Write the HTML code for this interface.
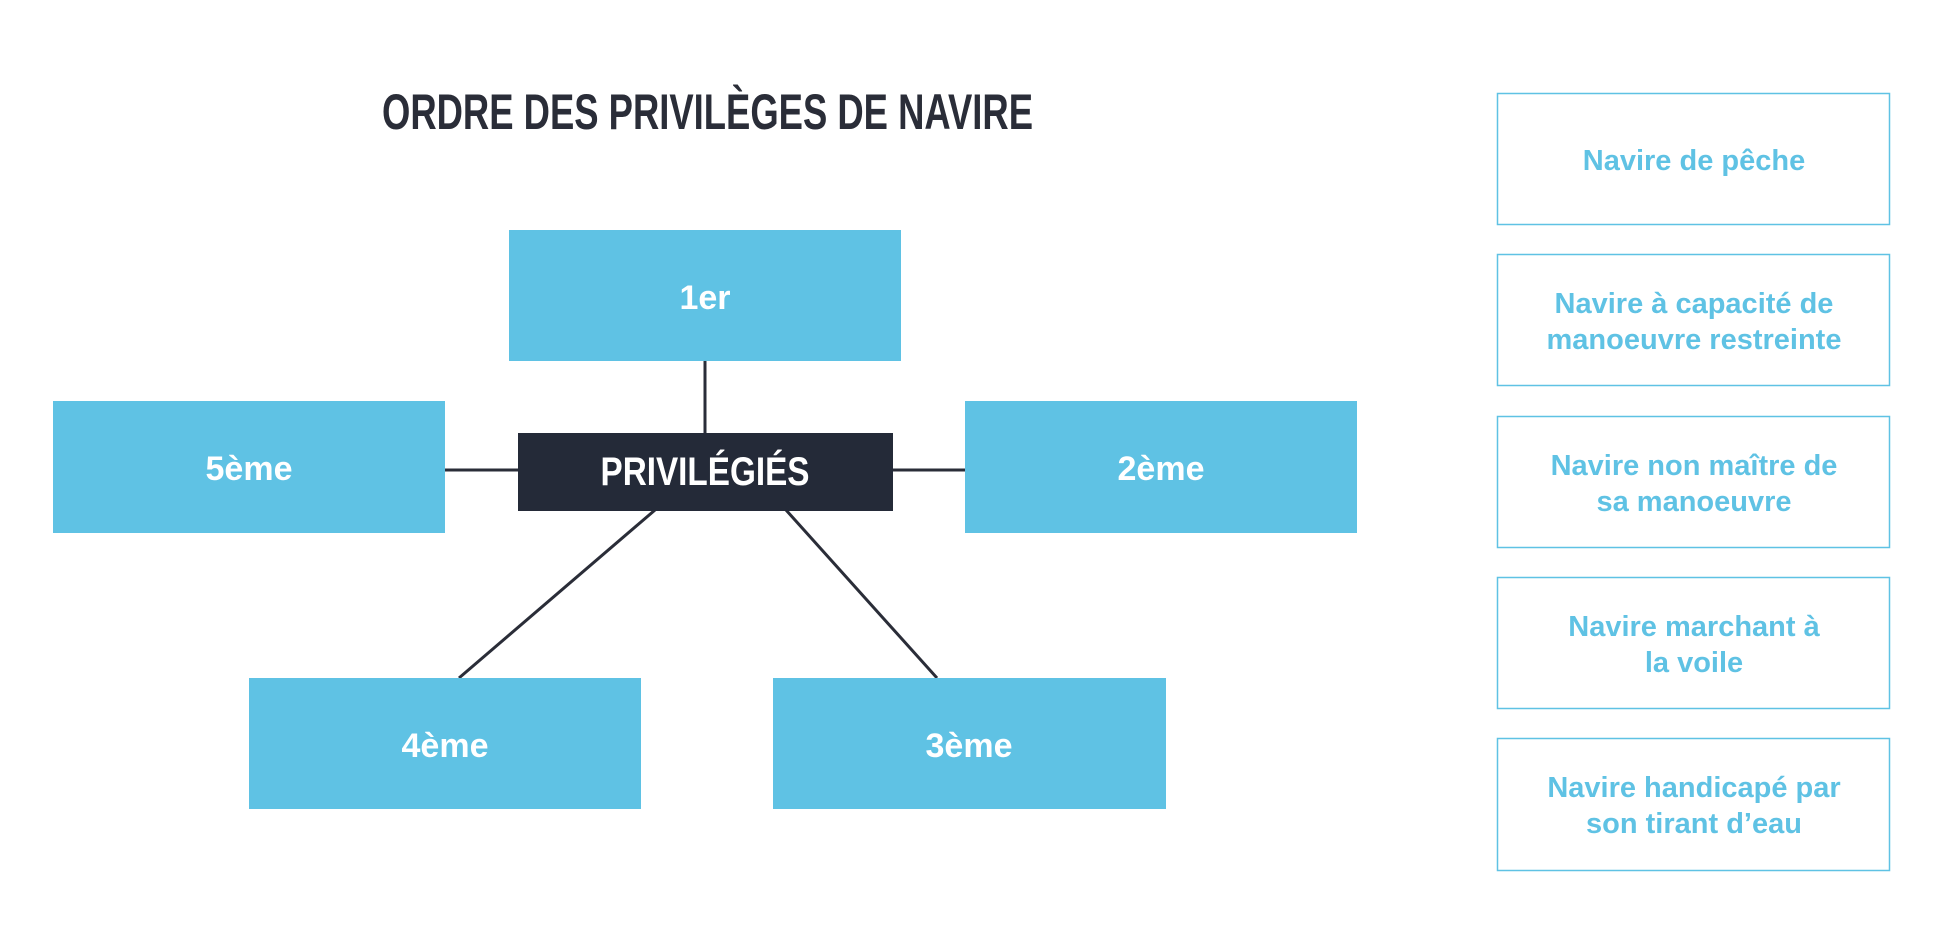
<!DOCTYPE html>
<html><head><meta charset="utf-8"><style>
html,body{margin:0;padding:0;background:#fff;width:1934px;height:930px;overflow:hidden}
svg{display:block}
</style></head><body>
<svg width="1934" height="930" viewBox="0 0 1934 930" xmlns="http://www.w3.org/2000/svg" font-family="Liberation Sans, Arial, sans-serif" font-weight="bold">
<text x="382" y="129" font-size="50" fill="#2a2d38" textLength="651" lengthAdjust="spacingAndGlyphs">ORDRE DES PRIVILÈGES DE NAVIRE</text>
<g stroke="#2a2d38" stroke-width="3">
<line x1="705" y1="361" x2="705" y2="433"/>
<line x1="445" y1="470" x2="518" y2="470"/>
<line x1="893" y1="470" x2="965" y2="470"/>
<line x1="655" y1="510" x2="459" y2="678"/>
<line x1="786" y1="510" x2="937" y2="678"/>
</g>
<g fill="#5fc2e4">
<rect x="509" y="230" width="392" height="131"/>
<rect x="53" y="401" width="392" height="132"/>
<rect x="965" y="401" width="392" height="132"/>
<rect x="249" y="678" width="392" height="131"/>
<rect x="773" y="678" width="393" height="131"/>
</g>
<rect x="518" y="433" width="375" height="78" fill="#242a38"/>
<text x="705" y="485" font-size="40" fill="#fff" text-anchor="middle" textLength="209" lengthAdjust="spacingAndGlyphs">PRIVILÉGIÉS</text>
<g fill="#fff" font-size="34" text-anchor="middle">
<text x="705" y="309">1er</text>
<text x="249" y="480">5ème</text>
<text x="1161" y="480">2ème</text>
<text x="445" y="757">4ème</text>
<text x="969" y="757">3ème</text>
</g>
<g fill="none" stroke="#5fc2e4" stroke-width="1.5">
<rect x="1497.5" y="93.5" width="392" height="131"/>
<rect x="1497.5" y="254.5" width="392" height="131"/>
<rect x="1497.5" y="416.5" width="392" height="131"/>
<rect x="1497.5" y="577.5" width="392" height="131"/>
<rect x="1497.5" y="738.5" width="392" height="132"/>
</g>
<g fill="#5fc2e4" font-size="29" text-anchor="middle">
<text x="1694" y="170">Navire de pêche</text>
<text x="1694" y="313">Navire à capacité de</text>
<text x="1694" y="349">manoeuvre restreinte</text>
<text x="1694" y="475">Navire non maître de</text>
<text x="1694" y="511">sa manoeuvre</text>
<text x="1694" y="636">Navire marchant à</text>
<text x="1694" y="672">la voile</text>
<text x="1694" y="797">Navire handicapé par</text>
<text x="1694" y="833">son tirant d’eau</text>
</g>
</svg>
</body></html>
